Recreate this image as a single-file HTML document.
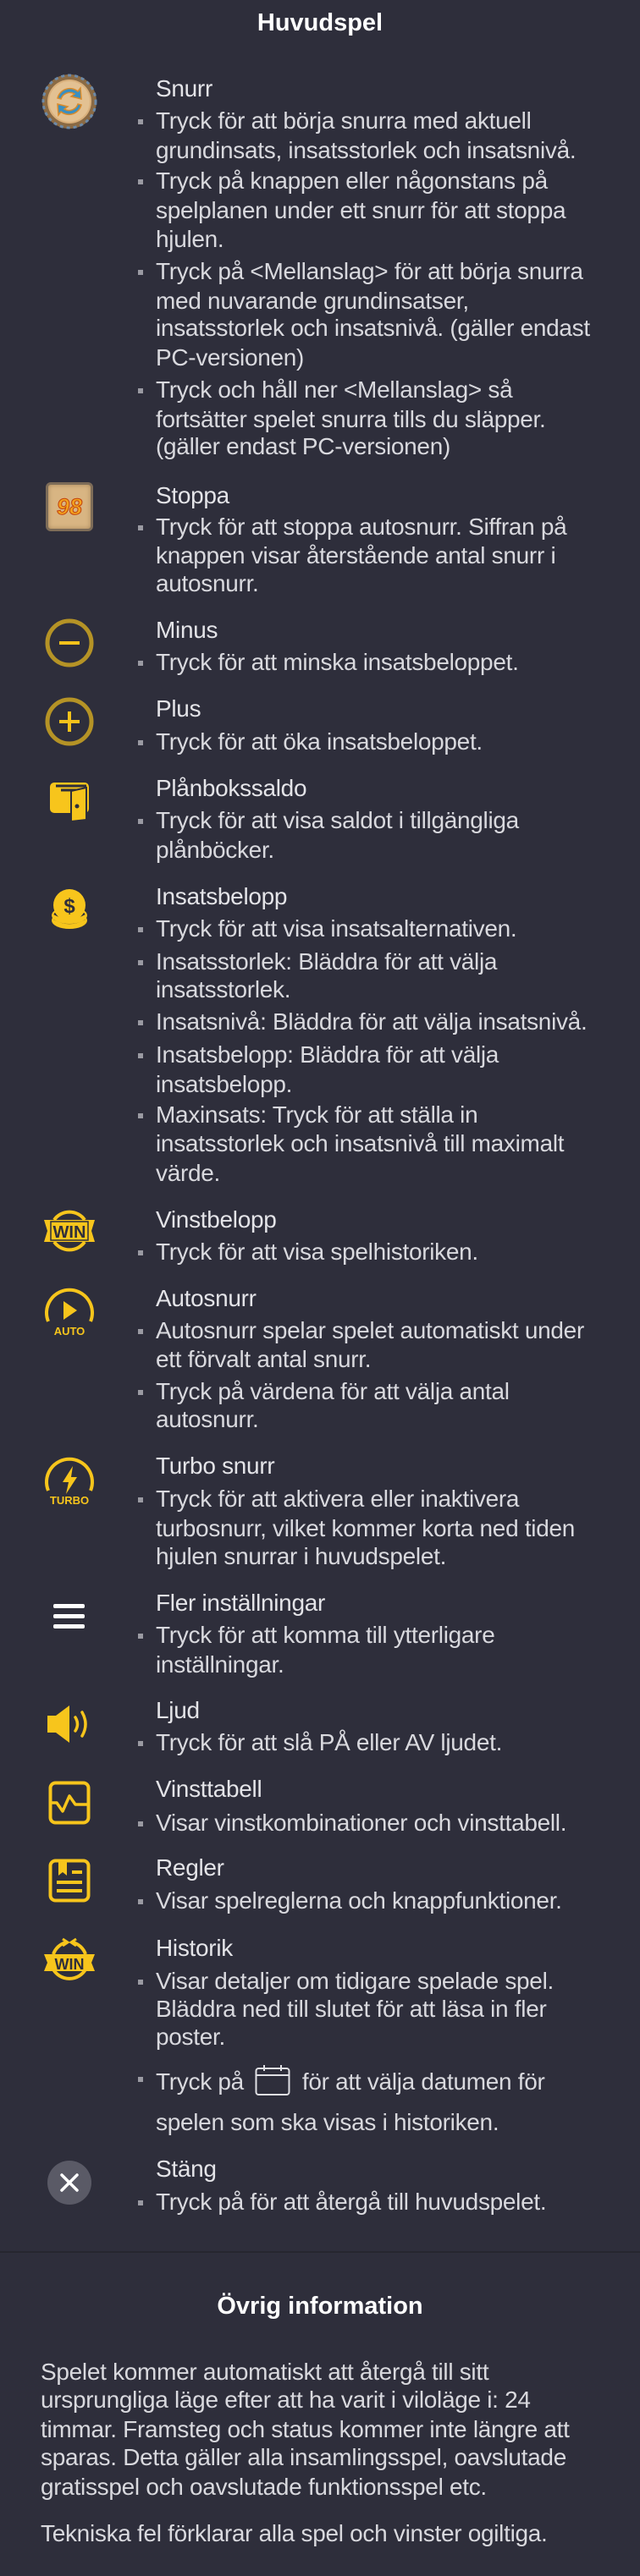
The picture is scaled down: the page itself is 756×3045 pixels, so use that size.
<!DOCTYPE html>
<html><head><meta charset="utf-8">
<style>
*{margin:0;padding:0;box-sizing:border-box}
html,body{width:756px;height:3045px;background:#2e2e3b;overflow:hidden}
body{position:relative;font-family:"Liberation Sans",sans-serif;color:#d9d9de;font-size:28px}
.l{position:absolute;left:184px;height:34px;line-height:34px;white-space:nowrap;letter-spacing:-0.3px}
.t{color:#e4e4e8}
.b::before{content:"";position:absolute;left:-21px;top:15px;width:6px;height:6px;background:#9a9aa2}
.h{position:absolute;left:0;width:756px;text-align:center;font-weight:bold;color:#fff;font-size:29px;height:40px;line-height:40px}
.i{position:absolute}
.p{position:absolute;left:48px;height:34px;line-height:34px;white-space:nowrap;letter-spacing:-0.3px}
</style></head><body>
<div class="h" style="top:7px">Huvudspel</div>

<svg class="i" style="left:48px;top:86px" width="68" height="68" viewBox="0 0 68 68">
<circle cx="34" cy="34" r="32" fill="#8a6a44"/>
<circle cx="34" cy="34" r="31" fill="none" stroke="#6d8aa8" stroke-width="3" stroke-dasharray="4 4"/>
<circle cx="34" cy="34" r="26" fill="#d9b07c"/>
<circle cx="34" cy="34" r="24" fill="#e3c192"/>
<path d="M20 30 A15 15 0 0 1 44 22 L47 18 L48 31 L36 28 L40 25 A11 11 0 0 0 24 31 Z" fill="#3a8fc0" stroke="#d88a2a" stroke-width="1.5"/>
<path d="M48 38 A15 15 0 0 1 24 46 L21 50 L20 37 L32 40 L28 43 A11 11 0 0 0 44 37 Z" fill="#3a8fc0" stroke="#d88a2a" stroke-width="1.5"/>
</svg>

<div class="i" style="left:54px;top:570px;width:56px;height:58px;border-radius:6px;background:#d8b583;border:3px solid #7d6c58;box-shadow:inset 0 0 6px #a8875a;text-align:center;line-height:52px;font-weight:bold;font-style:italic;font-size:27px;color:#f3a21d;-webkit-text-stroke:1px #c2410c">98</div>

<svg class="i" style="left:52px;top:730px" width="60" height="60" viewBox="0 0 60 60">
<circle cx="30" cy="30" r="26" fill="none" stroke="#b59326" stroke-width="5"/>
<rect x="18" y="28" width="24" height="4" fill="#f4c21b"/>
</svg>
<svg class="i" style="left:52px;top:823px" width="60" height="60" viewBox="0 0 60 60">
<circle cx="30" cy="30" r="26" fill="none" stroke="#b59326" stroke-width="5"/>
<rect x="18" y="28" width="24" height="4" fill="#f4c21b"/>
<rect x="28" y="18" width="4" height="24" fill="#f4c21b"/>
</svg>

<svg class="i" style="left:58px;top:923px" width="48" height="50" viewBox="0 0 48 50">
<rect x="1" y="2" width="46" height="36" rx="5" fill="#f7c51c"/>
<path d="M8 6 H44 M14 11 H42" stroke="#2e2e3b" stroke-width="3"/>
<path d="M26 12 L44 8 V46 L26 48 Z" fill="#f7c51c" stroke="#2e2e3b" stroke-width="2"/>
<circle cx="33" cy="30" r="2.5" fill="#2e2e3b"/>
</svg>

<svg class="i" style="left:60px;top:1050px" width="44" height="50" viewBox="0 0 44 50">
<ellipse cx="22" cy="38" rx="21" ry="10" fill="#f7c51c"/>
<path d="M4 36 Q22 46 40 36" stroke="#2e2e3b" stroke-width="2.5" fill="none"/>
<ellipse cx="22" cy="32" rx="21" ry="10" fill="#f7c51c"/>
<path d="M4 30 Q22 40 40 30" stroke="#2e2e3b" stroke-width="2.5" fill="none"/>
<circle cx="22" cy="20" r="19" fill="#f7c51c"/>
<text x="22" y="29" text-anchor="middle" font-family="Liberation Sans" font-weight="bold" font-size="24" fill="#2e2e3b">$</text>
</svg>

<svg class="i" style="left:50px;top:1428px" width="64" height="54" viewBox="0 0 64 54">
<path d="M14 14 A22 22 0 0 1 50 14 M14 40 A22 22 0 0 0 50 40" stroke="#f7c51c" stroke-width="4" fill="none"/>
<path d="M2 14 H62 L58 27 L62 40 H2 L6 27 Z" fill="#f7c51c"/>
<rect x="10" y="16" width="44" height="22" fill="none" stroke="#2e2e3b" stroke-width="1.5"/>
<text x="32" y="35" text-anchor="middle" font-family="Liberation Sans" font-weight="bold" font-size="20" fill="#2e2e3b">WIN</text>
</svg>

<svg class="i" style="left:50px;top:1518px" width="64" height="64" viewBox="0 0 64 64">
<path d="M7 44 A27 27 0 1 1 57 44" stroke="#f7c51c" stroke-width="4" fill="none"/>
<path d="M25 20 L41 31 L25 42 Z" fill="#f7c51c"/>
<text x="32" y="60" text-anchor="middle" font-family="Liberation Sans" font-weight="bold" font-size="13" fill="#f7c51c">AUTO</text>
</svg>

<svg class="i" style="left:50px;top:1718px" width="64" height="64" viewBox="0 0 64 64">
<path d="M7 44 A27 27 0 1 1 57 44" stroke="#f7c51c" stroke-width="4" fill="none"/>
<path d="M36 15 L24 34 H31 L28 48 L41 28 H34 Z" fill="#f7c51c"/>
<text x="32" y="60" text-anchor="middle" font-family="Liberation Sans" font-weight="bold" font-size="13" fill="#f7c51c">TURBO</text>
</svg>

<svg class="i" style="left:62px;top:1893px" width="40" height="34" viewBox="0 0 40 34">
<rect x="1" y="3" width="37" height="5" rx="2" fill="#fff"/>
<rect x="1" y="15" width="37" height="5" rx="2" fill="#fff"/>
<rect x="1" y="27" width="37" height="5" rx="2" fill="#fff"/>
</svg>

<svg class="i" style="left:54px;top:2014px" width="56" height="48" viewBox="0 0 56 48">
<path d="M2 14 H12 L28 2 V46 L12 34 H2 Z" fill="#f7c51c"/>
<path d="M35 16 Q40 24 35 32" stroke="#f7c51c" stroke-width="3.5" fill="none" stroke-linecap="round"/>
<path d="M43 10 Q51 24 43 38" stroke="#f7c51c" stroke-width="3.5" fill="none" stroke-linecap="round"/>
</svg>

<svg class="i" style="left:57px;top:2105px" width="50" height="52" viewBox="0 0 50 52">
<rect x="2.5" y="2.5" width="45" height="47" rx="6" fill="none" stroke="#f7c51c" stroke-width="4"/>
<path d="M3 26 H10 L17 36 L25 18 L32 28 H47" stroke="#f7c51c" stroke-width="3.5" fill="none" stroke-linejoin="round"/>
</svg>

<svg class="i" style="left:57px;top:2197px" width="50" height="52" viewBox="0 0 50 52">
<rect x="2.5" y="2.5" width="45" height="47" rx="6" fill="none" stroke="#f7c51c" stroke-width="4"/>
<path d="M12 2 V20 L17 16 L22 20 V2 Z" fill="#f7c51c"/>
<rect x="28" y="14" width="12" height="4" fill="#f7c51c"/>
<rect x="10" y="26" width="30" height="4" fill="#f7c51c"/>
<rect x="10" y="36" width="30" height="4" fill="#f7c51c"/>
</svg>

<svg class="i" style="left:50px;top:2290px" width="64" height="56" viewBox="0 0 64 56">
<path d="M13 20 A22 22 0 0 1 28 6 M36 6 A22 22 0 0 1 51 20 M13 38 A22 22 0 0 0 51 38" stroke="#f7c51c" stroke-width="4" fill="none"/>
<path d="M24 2 L30 6 L24 10 M40 2 L34 6 L40 10" stroke="#f7c51c" stroke-width="3" fill="none"/>
<path d="M2 20 H62 L58 30 L62 40 H2 L6 30 Z" fill="#f7c51c"/>
<text x="32" y="38" text-anchor="middle" font-family="Liberation Sans" font-weight="bold" font-size="18" fill="#2e2e3b">WIN</text>
</svg>

<svg class="i" style="left:56px;top:2554px" width="52" height="52" viewBox="0 0 52 52">
<circle cx="26" cy="26" r="26" fill="#5a5a66"/>
<path d="M17 17 L35 35 M35 17 L17 35" stroke="#fff" stroke-width="3.5" stroke-linecap="round"/>
</svg>

<div class="l t" style="top:88px">Snurr</div>
<div class="l b" style="top:126px">Tryck för att börja snurra med aktuell</div>
<div class="l" style="top:161px">grundinsats, insatsstorlek och insatsnivå.</div>
<div class="l b" style="top:197px">Tryck på knappen eller någonstans på</div>
<div class="l" style="top:232px">spelplanen under ett snurr för att stoppa</div>
<div class="l" style="top:266px">hjulen.</div>
<div class="l b" style="top:304px">Tryck på &lt;Mellanslag&gt; för att börja snurra</div>
<div class="l" style="top:339px">med nuvarande grundinsatser,</div>
<div class="l" style="top:371px">insatsstorlek och insatsnivå. (gäller endast</div>
<div class="l" style="top:406px">PC-versionen)</div>
<div class="l b" style="top:444px">Tryck och håll ner &lt;Mellanslag&gt; så</div>
<div class="l" style="top:479px">fortsätter spelet snurra tills du släpper.</div>
<div class="l" style="top:511px">(gäller endast PC-versionen)</div>

<div class="l t" style="top:569px">Stoppa</div>
<div class="l b" style="top:606px">Tryck för att stoppa autosnurr. Siffran på</div>
<div class="l" style="top:640px">knappen visar återstående antal snurr i</div>
<div class="l" style="top:673px">autosnurr.</div>

<div class="l t" style="top:728px">Minus</div>
<div class="l b" style="top:766px">Tryck för att minska insatsbeloppet.</div>

<div class="l t" style="top:821px">Plus</div>
<div class="l b" style="top:860px">Tryck för att öka insatsbeloppet.</div>

<div class="l t" style="top:915px">Plånbokssaldo</div>
<div class="l b" style="top:953px">Tryck för att visa saldot i tillgängliga</div>
<div class="l" style="top:988px">plånböcker.</div>

<div class="l t" style="top:1043px">Insatsbelopp</div>
<div class="l b" style="top:1081px">Tryck för att visa insatsalternativen.</div>
<div class="l b" style="top:1120px">Insatsstorlek: Bläddra för att välja</div>
<div class="l" style="top:1153px">insatsstorlek.</div>
<div class="l b" style="top:1191px">Insatsnivå: Bläddra för att välja insatsnivå.</div>
<div class="l b" style="top:1230px">Insatsbelopp: Bläddra för att välja</div>
<div class="l" style="top:1265px">insatsbelopp.</div>
<div class="l b" style="top:1301px">Maxinsats: Tryck för att ställa in</div>
<div class="l" style="top:1335px">insatsstorlek och insatsnivå till maximalt</div>
<div class="l" style="top:1370px">värde.</div>

<div class="l t" style="top:1425px">Vinstbelopp</div>
<div class="l b" style="top:1463px">Tryck för att visa spelhistoriken.</div>

<div class="l t" style="top:1518px">Autosnurr</div>
<div class="l b" style="top:1556px">Autosnurr spelar spelet automatiskt under</div>
<div class="l" style="top:1590px">ett förvalt antal snurr.</div>
<div class="l b" style="top:1628px">Tryck på värdena för att välja antal</div>
<div class="l" style="top:1661px">autosnurr.</div>

<div class="l t" style="top:1716px">Turbo snurr</div>
<div class="l b" style="top:1755px">Tryck för att aktivera eller inaktivera</div>
<div class="l" style="top:1790px">turbosnurr, vilket kommer korta ned tiden</div>
<div class="l" style="top:1823px">hjulen snurrar i huvudspelet.</div>

<div class="l t" style="top:1878px">Fler inställningar</div>
<div class="l b" style="top:1916px">Tryck för att komma till ytterligare</div>
<div class="l" style="top:1951px">inställningar.</div>

<div class="l t" style="top:2005px">Ljud</div>
<div class="l b" style="top:2043px">Tryck för att slå PÅ eller AV ljudet.</div>

<div class="l t" style="top:2098px">Vinsttabell</div>
<div class="l b" style="top:2138px">Visar vinstkombinationer och vinsttabell.</div>

<div class="l t" style="top:2191px">Regler</div>
<div class="l b" style="top:2230px">Visar spelreglerna och knappfunktioner.</div>

<div class="l t" style="top:2286px">Historik</div>
<div class="l b" style="top:2325px">Visar detaljer om tidigare spelade spel.</div>
<div class="l" style="top:2358px">Bläddra ned till slutet för att läsa in fler</div>
<div class="l" style="top:2391px">poster.</div>
<div class="l b" style="top:2440px">Tryck på <svg width="42" height="38" viewBox="0 0 42 38" style="vertical-align:-8px;margin:0 6px">
<rect x="1.5" y="5" width="39" height="31" rx="3" fill="none" stroke="#e0e0e4" stroke-width="2"/>
<path d="M2 13 H40 M11 1 V8 M31 1 V8" stroke="#e0e0e4" stroke-width="2"/>
</svg> för att välja datumen för</div>
<div class="l" style="top:2492px">spelen som ska visas i historiken.</div>

<div class="l t" style="top:2547px">Stäng</div>
<div class="l b" style="top:2586px">Tryck på för att återgå till huvudspelet.</div>

<div style="position:absolute;left:0;top:2661px;width:756px;height:2px;background:#26262f"></div>

<div class="h" style="top:2706px">Övrig information</div>
<div class="p" style="top:2787px">Spelet kommer automatiskt att återgå till sitt</div>
<div class="p" style="top:2820px">ursprungliga läge efter att ha varit i viloläge i: 24</div>
<div class="p" style="top:2855px">timmar. Framsteg och status kommer inte längre att</div>
<div class="p" style="top:2888px">sparas. Detta gäller alla insamlingsspel, oavslutade</div>
<div class="p" style="top:2923px">gratisspel och oavslutade funktionsspel etc.</div>
<div class="p" style="top:2978px">Tekniska fel förklarar alla spel och vinster ogiltiga.</div>
</body></html>
